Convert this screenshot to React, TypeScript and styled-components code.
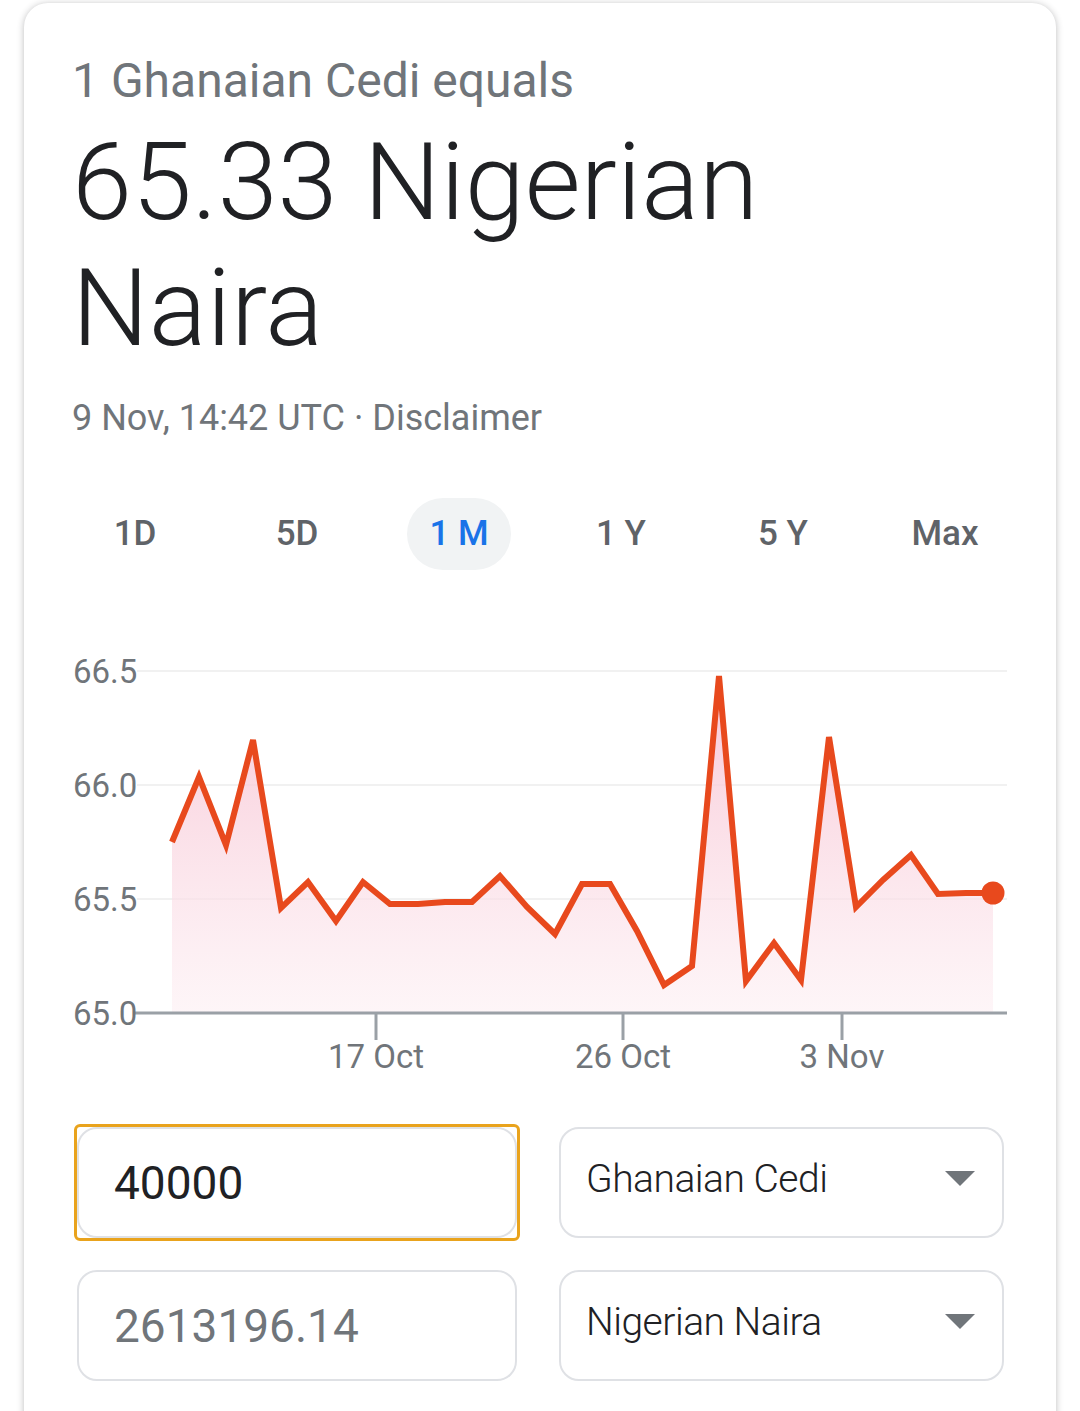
import React from "react";
import styled, { createGlobalStyle } from "styled-components";

const GlobalStyle = createGlobalStyle`
  html, body {
    margin: 0;
    padding: 0;
    background: #ffffff;
    overflow: hidden;
  }
  body {
    font-family: Roboto, "Noto Sans", "Liberation Sans", sans-serif;
  }
`;

const Card = styled.div`
  box-sizing: border-box;
  width: 1032px;
  min-height: 1500px;
  margin: 3px 24px 0;
  padding: 50px 48px 0;
  background: #ffffff;
  border-radius: 24px;
  box-shadow: 0 1px 7px rgba(32, 33, 36, 0.3);
`;

const Equals = styled.div`
  font-size: 48px;
  line-height: 56px;
  color: #70757a;
`;

const Result = styled.div`
  margin-top: 10px;
  font-size: 108px;
  font-weight: 300;
  line-height: 126px;
  color: #202124;
`;

const Stamp = styled.div`
  margin-top: 25px;
  font-size: 36px;
  line-height: 44px;
  color: #70757a;
`;

const Tabs = styled.div`
  display: flex;
  margin: 58px -18px 0;
`;

const Tab = styled.div`
  flex: 1;
  display: flex;
  justify-content: center;
`;

const TabLabel = styled.span<{ $active?: boolean }>`
  height: 72px;
  line-height: 72px;
  padding: 0 22px;
  border-radius: 36px;
  font-size: 35px;
  font-weight: 500;
  color: ${(p) => (p.$active ? "#1a73e8" : "#5f6368")};
  background: ${(p) => (p.$active ? "#f1f3f4" : "transparent")};
`;

const Chart = styled.svg`
  display: block;
  margin: 60px -48px 0;
`;

const Converter = styled.div`
  display: grid;
  grid-template-columns: 440px 445px;
  grid-auto-rows: 111px;
  column-gap: 42px;
  row-gap: 32px;
  margin: 27px 0 0 5px;
`;

const FocusRing = styled.div`
  margin: -3px;
  border: 3px solid #e9a31d;
  border-radius: 6px;
`;

const Field = styled.div<{ $muted?: boolean }>`
  box-sizing: border-box;
  height: 111px;
  display: flex;
  align-items: center;
  padding-left: 35px;
  border: 2px solid #dfe1e5;
  border-radius: 20px;
  font-size: 46px;
  color: ${(p) => (p.$muted ? "#70757a" : "#202124")};
`;

const Select = styled.div`
  box-sizing: border-box;
  height: 111px;
  display: flex;
  align-items: center;
  justify-content: space-between;
  padding: 0 27px 8px 25px;
  border: 2px solid #dfe1e5;
  border-radius: 20px;
  font-size: 39px;
  font-weight: 300;
  letter-spacing: -0.5px;
  color: #202124;
`;

const Caret = () => (
  <svg width="30" height="15" viewBox="0 0 30 15">
    <polygon points="0,0 30,0 15,15" fill="#70757a" />
  </svg>
);

const tabs = ["1D", "5D", "1 M", "1 Y", "5 Y", "Max"];

// page coordinates of the line, one point per day
const points: [number, number][] = [
  [172, 842], [199, 777], [226, 845], [253, 740], [281, 908], [308, 882],
  [336, 921], [363, 882], [390, 904], [418, 904], [445, 902], [472, 902],
  [500, 876], [527, 907], [555, 934], [582, 884], [610, 884], [637, 931],
  [664, 985], [692, 966], [719, 676], [746, 981], [774, 943], [801, 980],
  [829, 737], [856, 907], [883, 880], [911, 855], [938, 894], [966, 893],
  [993, 893],
];

const yTicks = [
  { label: "66.5", y: 671 },
  { label: "66.0", y: 785 },
  { label: "65.5", y: 899 },
];

const xTicks = [
  { label: "17 Oct", x: 376 },
  { label: "26 Oct", x: 623 },
  { label: "3 Nov", x: 842 },
];

const RateChart: React.FC = () => {
  const line = points.map(([x, y], i) => `${i ? "L" : "M"}${x} ${y}`).join(" ");
  const area = `${line} L993 1012 L172 1012 Z`;
  const last = points[points.length - 1];

  return (
    <Chart width={1032} height={470} viewBox="24 630 1032 470">
      <defs>
        <linearGradient id="fillGrad" x1="0" y1="0" x2="0" y2="1">
          <stop offset="0%" stopColor="#f7bfd0" stopOpacity="0.85" />
          <stop offset="100%" stopColor="#fdeff3" stopOpacity="0.6" />
        </linearGradient>
      </defs>
      {yTicks.map((t) => (
        <g key={t.label}>
          <line x1={137} x2={1007} y1={t.y} y2={t.y} stroke="#f1f1f1" strokeWidth={2} />
          <text x={73} y={t.y + 12} fontSize={33} fill="#70757a" fontFamily="Roboto">
            {t.label}
          </text>
        </g>
      ))}
      <path d={area} fill="url(#fillGrad)" />
      <path d={line} fill="none" stroke="#e8491d" strokeWidth={6} strokeLinejoin="miter" />
      <circle cx={last[0]} cy={last[1]} r={11.5} fill="#e8491d" />
      <line x1={135} x2={1007} y1={1013} y2={1013} stroke="#9aa0a6" strokeWidth={3} />
      <text x={73} y={1025} fontSize={33} fill="#70757a" fontFamily="Roboto">
        65.0
      </text>
      {xTicks.map((t) => (
        <g key={t.label}>
          <line x1={t.x} x2={t.x} y1={1013} y2={1040} stroke="#9aa0a6" strokeWidth={3} />
          <text x={t.x} y={1068} fontSize={33} fill="#70757a" textAnchor="middle" fontFamily="Roboto">
            {t.label}
          </text>
        </g>
      ))}
    </Chart>
  );
};

const App: React.FC = () => {
  return (
    <>
      <GlobalStyle />
      <Card>
        <Equals>1 Ghanaian Cedi equals</Equals>
        <Result>65.33 Nigerian Naira</Result>
        <Stamp>9 Nov, 14:42 UTC · Disclaimer</Stamp>
        <Tabs>
          {tabs.map((t) => (
            <Tab key={t}>
              <TabLabel $active={t === "1 M"}>{t}</TabLabel>
            </Tab>
          ))}
        </Tabs>
        <RateChart />
        <Converter>
          <FocusRing>
            <Field>40000</Field>
          </FocusRing>
          <Select>
            Ghanaian Cedi
            <Caret />
          </Select>
          <Field $muted>2613196.14</Field>
          <Select>
            Nigerian Naira
            <Caret />
          </Select>
        </Converter>
      </Card>
    </>
  );
};

export default App;
